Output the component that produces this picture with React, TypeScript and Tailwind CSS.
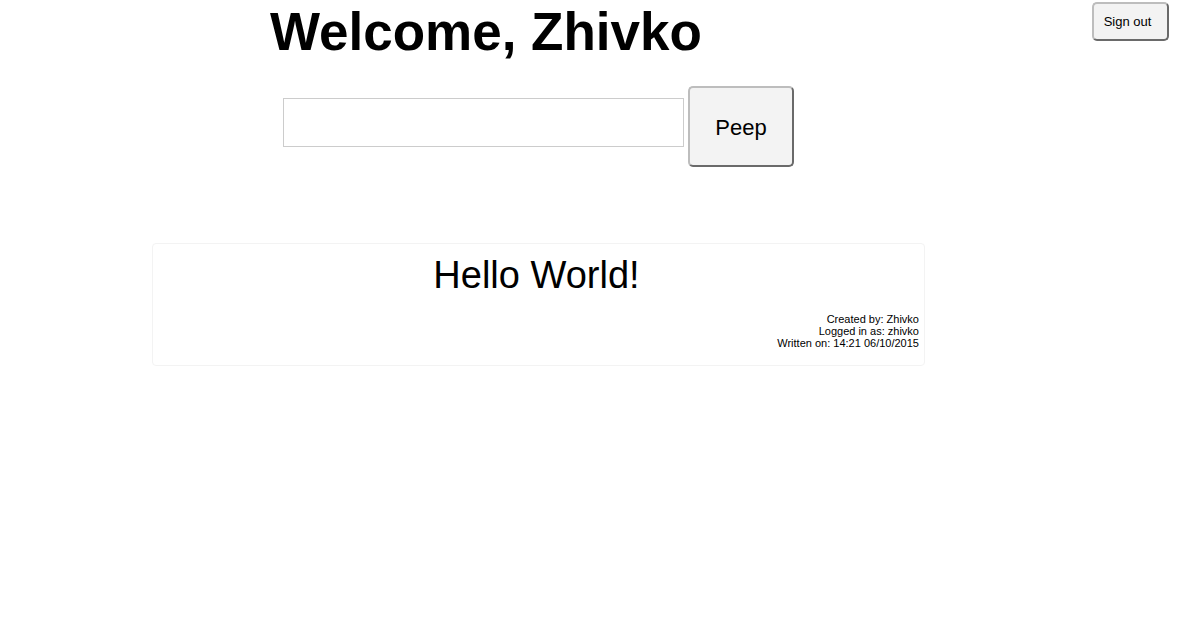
export default function App() {
  return (
    <div className="grid grid-cols-[minmax(0,1fr)_auto] items-start bg-white font-['Liberation_Sans',Arial,sans-serif] text-black">
      <main className="flex flex-col pl-[13%]">
        <h1 className="pl-[128px] text-[53px] leading-[64px] font-bold">Welcome, Zhivko</h1>
        <form className="mt-[22px] flex max-w-[652px] items-start gap-1 pl-[141px]" onSubmit={(e) => e.preventDefault()}>
          <input
            type="text"
            aria-label="Peep message"
            className="mt-3 h-[49px] min-w-0 flex-1 border border-[#cccccc] bg-white px-3 text-[22px] outline-none"
          />
          <button
            type="submit"
            className="h-[81px] w-[106px] rounded-[5px] border-2 border-t-[#bdbdbd] border-r-[#6a6a6a] border-b-[#6a6a6a] border-l-[#bdbdbd] bg-[#f3f3f3] pt-0.5 text-[22px]"
          >
            Peep
          </button>
        </form>
        <div className="mt-[76px] pl-[10px]">
          <article className="max-w-[773px] rounded-[4px] border border-[#f3f3f3] px-[5px] pt-2 pb-4">
            <p className="pr-1 text-center text-[38px] leading-[46px]">Hello World!</p>
            <footer className="mt-[15px] text-right text-[11px] leading-3">
              <p>Created by: Zhivko</p>
              <p>Logged in as: zhivko</p>
              <p>Written on: 14:21 06/10/2015</p>
            </footer>
          </article>
        </div>
      </main>
      <button
        type="button"
        className="mt-[2px] mr-[9px] h-[39px] w-[77px] rounded-[5px] border-2 border-t-[#bdbdbd] border-r-[#6a6a6a] border-b-[#6a6a6a] border-l-[#bdbdbd] bg-[#f3f3f3] pr-1.5 text-[13px]"
      >
        Sign out
      </button>
    </div>
  );
}
